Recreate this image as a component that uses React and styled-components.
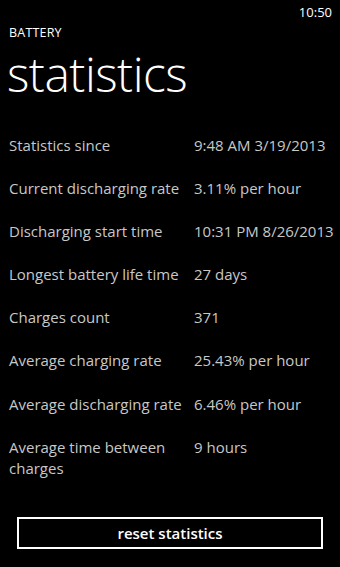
import React from 'react'
import styled, { createGlobalStyle } from 'styled-components'

const GlobalStyle = createGlobalStyle`
  html, body {
    margin: 0;
    padding: 0;
    background: #000;
  }
  body {
    font-family: "Open Sans", "Noto Sans", sans-serif;
  }
`

const Screen = styled.div`
  width: 340px;
  height: 567px;
  background: #000;
  color: #fff;
  display: flex;
  flex-direction: column;
  overflow: hidden;
`

const StatusBar = styled.div`
  height: 24px;
  display: flex;
  justify-content: flex-end;
  align-items: center;
  padding: 0 8px;
  font-size: 13px;
  color: #fff;
`

const AppName = styled.div`
  margin: 1px 0 0 9px;
  font-size: 12.5px;
  line-height: 16px;
  letter-spacing: 0.2px;
`

const PageTitle = styled.h1`
  margin: 6px 0 0 7px;
  font-size: 48px;
  font-weight: 300;
  line-height: 54px;
  letter-spacing: -0.5px;
`

const Stats = styled.div`
  display: grid;
  grid-template-columns: 178px 1fr;
  column-gap: 7px;
  row-gap: 22.1px;
  margin: 34px 0 0 9px;
  font-size: 15px;
  line-height: 21px;
  color: #c8c8c8;
`

const Label = styled.div``

const Value = styled.div``

const Footer = styled.div`
  margin-top: auto;
  padding: 0 17px 18px;
`

const ResetButton = styled.button`
  width: 100%;
  height: 32px;
  background: transparent;
  border: 2px solid #fff;
  color: #fff;
  font-family: "Open Sans", "Noto Sans", sans-serif;
  font-size: 15px;
  font-weight: 600;
  padding: 0;
`

const stats = [
  ['Statistics since', '9:48 AM 3/19/2013'],
  ['Current discharging rate', '3.11% per hour'],
  ['Discharging start time', '10:31 PM 8/26/2013'],
  ['Longest battery life time', '27 days'],
  ['Charges count', '371'],
  ['Average charging rate', '25.43% per hour'],
  ['Average discharging rate', '6.46% per hour'],
  ['Average time between charges', '9 hours'],
]

const App = () => {
  return (
    <Screen>
      <GlobalStyle />
      <StatusBar>10:50</StatusBar>
      <AppName>BATTERY</AppName>
      <PageTitle>statistics</PageTitle>
      <Stats>
        {stats.map(([label, value]) => (
          <React.Fragment key={label}>
            <Label>{label}</Label>
            <Value>{value}</Value>
          </React.Fragment>
        ))}
      </Stats>
      <Footer>
        <ResetButton>reset statistics</ResetButton>
      </Footer>
    </Screen>
  )
}

export default App
